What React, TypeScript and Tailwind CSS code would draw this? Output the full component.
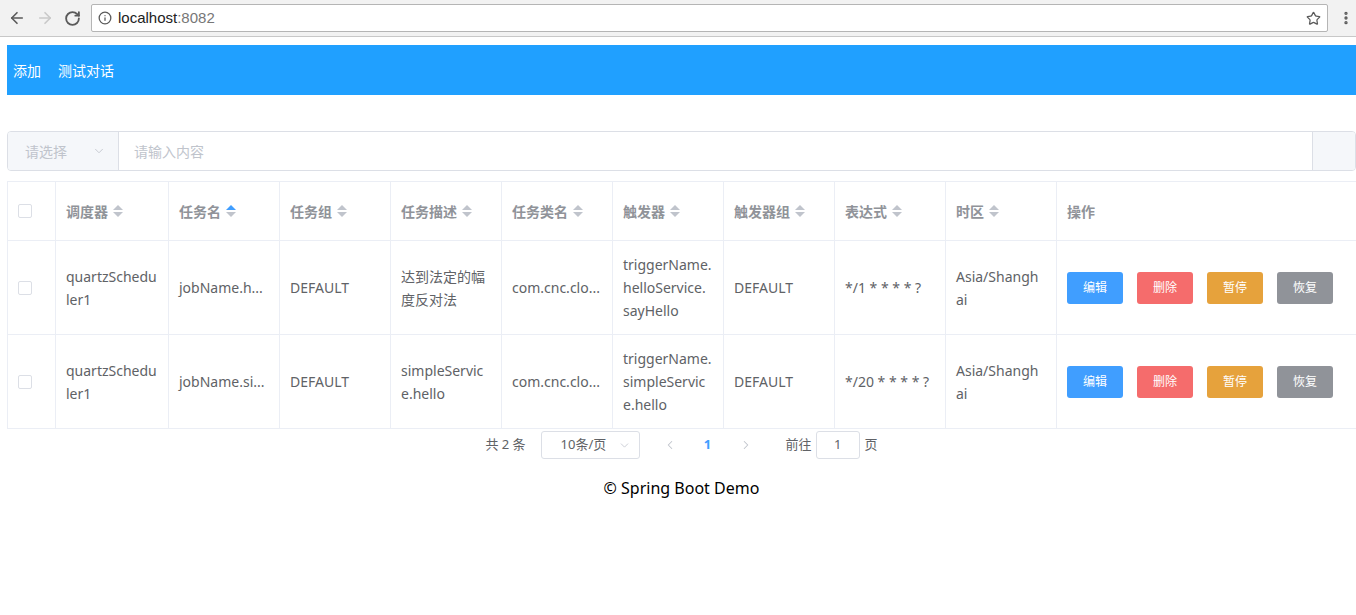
import { ArrowLeft, ArrowRight, RotateCw, Info, Star, EllipsisVertical, ChevronDown, ChevronLeft, ChevronRight } from "lucide-react";

type Row = {
  scheduler: string[];
  job: string;
  group: string;
  desc: string[];
  cls: string;
  trigger: string[];
  tgroup: string;
  cron: string;
  zone: string[];
};

const rows: Row[] = [
  {
    scheduler: ["quartzSchedu", "ler1"],
    job: "jobName.h...",
    group: "DEFAULT",
    desc: ["达到法定的幅", "度反对法"],
    cls: "com.cnc.clo...",
    trigger: ["triggerName.", "helloService.", "sayHello"],
    tgroup: "DEFAULT",
    cron: "*/1 * * * * ?",
    zone: ["Asia/Shangh", "ai"],
  },
  {
    scheduler: ["quartzSchedu", "ler1"],
    job: "jobName.si...",
    group: "DEFAULT",
    desc: ["simpleServic", "e.hello"],
    cls: "com.cnc.clo...",
    trigger: ["triggerName.", "simpleServic", "e.hello"],
    tgroup: "DEFAULT",
    cron: "*/20 * * * * ?",
    zone: ["Asia/Shangh", "ai"],
  },
];

const columns = [
  { label: "调度器", w: "w-[113px]" },
  { label: "任务名", w: "w-[111px]", active: true },
  { label: "任务组", w: "w-[111px]" },
  { label: "任务描述", w: "w-[111px]" },
  { label: "任务类名", w: "w-[111px]" },
  { label: "触发器", w: "w-[111px]" },
  { label: "触发器组", w: "w-[111px]" },
  { label: "表达式", w: "w-[111px]" },
  { label: "时区", w: "w-[111px]" },
];

const SortCaret = ({ active }: { active?: boolean }) => (
  <span className="ml-[5px] flex flex-col gap-[2px]">
    <span
      className={`h-0 w-0 border-x-[5px] border-b-[5px] border-x-transparent ${
        active ? "border-b-[#409eff]" : "border-b-[#c0c4cc]"
      }`}
    />
    <span className="h-0 w-0 border-x-[5px] border-t-[5px] border-x-transparent border-t-[#c0c4cc]" />
  </span>
);

const Checkbox = () => (
  <span className="ml-[10px] block h-[14px] w-[14px] rounded-[2px] border border-[#dcdfe6] bg-white" />
);

const Lines = ({ lines }: { lines: string[] }) => (
  <div>
    {lines.map((l, i) => (
      <div key={i}>{l}</div>
    ))}
  </div>
);

const cell = "flex shrink-0 items-center border-r border-b border-[#ebeef5] px-[10px]";

const ActionButton = ({ label, color }: { label: string; color: string }) => (
  <button className={`h-[32px] w-[56px] rounded-[3px] text-[12px] text-white ${color}`}>{label}</button>
);

export default function App() {
  return (
    <div className="h-[615px] w-[1356px] overflow-hidden bg-white font-['Noto_Sans','Noto_Sans_CJK_SC',sans-serif]">
      {/* browser chrome */}
      <div className="flex h-[37px] items-center border-b border-[#c8c8c8] bg-[#f2f2f2]">
        <div className="ml-[8px] flex items-center gap-[10px]">
          <ArrowLeft className="h-[18px] w-[18px] text-[#5a5a5a]" strokeWidth={2.2} />
          <ArrowRight className="h-[18px] w-[18px] text-[#c9c9c9]" strokeWidth={2.2} />
          <RotateCw className="h-[17px] w-[17px] text-[#5a5a5a]" strokeWidth={2.6} />
        </div>
        <div className="ml-[10px] flex h-[28px] w-[1237px] items-center rounded-[2px] border border-[#b5b5b5] bg-white">
          <Info className="ml-[6px] h-[14px] w-[14px] text-[#5a5a5a]" strokeWidth={2.2} />
          <span className="ml-[6px] font-['Liberation_Sans',sans-serif] text-[15px] text-[#222]">
            localhost<span className="text-[#777]">:8082</span>
          </span>
          <Star className="ml-auto mr-[6px] h-[15px] w-[15px] text-[#5a5a5a]" strokeWidth={2} />
        </div>
        <EllipsisVertical className="ml-[10px] h-[16px] w-[16px] text-[#5a5a5a]" strokeWidth={3} />
      </div>

      <div className="ml-[7px] w-[1349px] pt-[8px]">
        {/* top bar */}
        <div className="flex h-[50px] items-center gap-[17px] bg-[#20a0ff] pl-[6px] text-[14px] text-white">
          <span>添加</span>
          <span>测试对话</span>
        </div>

        {/* search */}
        <div className="mt-[36px] flex h-[40px] overflow-hidden rounded-[4px] border border-[#dcdfe6] text-[14px]">
          <div className="flex w-[111px] shrink-0 items-center border-r border-[#dcdfe6] bg-[#f5f7fa] pl-[17px] pr-[12px] text-[#c0c4cc]">
            <span>请选择</span>
            <ChevronDown className="ml-auto h-[14px] w-[14px] text-[#c0c4cc]" strokeWidth={1.5} />
          </div>
          <div className="flex flex-1 items-center pl-[15px] text-[#c0c4cc]">请输入内容</div>
          <div className="w-[43px] shrink-0 border-l border-[#dcdfe6] bg-[#f5f7fa]" />
        </div>

        {/* table */}
        <div className="mt-[10px] w-[1490px] border-t border-l border-[#ebeef5] text-[14px] leading-[23px] text-[#606266]">
          <div className="flex h-[59px] font-bold text-[#909399]">
            <div className={`${cell} w-[48px] !px-0`}>
              <Checkbox />
            </div>
            {columns.map((c) => (
              <div key={c.label} className={`${cell} ${c.w}`}>
                <span>{c.label}</span>
                <SortCaret active={c.active} />
              </div>
            ))}
            <div className={`${cell} w-[330px]`}>操作</div>
          </div>
          {rows.map((r, i) => (
            <div key={i} className="flex h-[94px]">
              <div className={`${cell} w-[48px] !px-0`}>
                <Checkbox />
              </div>
              <div className={`${cell} w-[113px]`}>
                <Lines lines={r.scheduler} />
              </div>
              <div className={`${cell} w-[111px]`}>{r.job}</div>
              <div className={`${cell} w-[111px]`}>{r.group}</div>
              <div className={`${cell} w-[111px]`}>
                <Lines lines={r.desc} />
              </div>
              <div className={`${cell} w-[111px]`}>{r.cls}</div>
              <div className={`${cell} w-[111px]`}>
                <Lines lines={r.trigger} />
              </div>
              <div className={`${cell} w-[111px]`}>{r.tgroup}</div>
              <div className={`${cell} w-[111px]`}>{r.cron}</div>
              <div className={`${cell} w-[111px]`}>
                <Lines lines={r.zone} />
              </div>
              <div className={`${cell} w-[330px] gap-[14px]`}>
                <ActionButton label="编辑" color="bg-[#409eff]" />
                <ActionButton label="删除" color="bg-[#f56c6c]" />
                <ActionButton label="暂停" color="bg-[#e6a23c]" />
                <ActionButton label="恢复" color="bg-[#909399]" />
              </div>
            </div>
          ))}
        </div>

        {/* pagination */}
        <div className="mt-[2px] flex h-[28px] items-center justify-center text-[13px] text-[#606266]">
          <span className="mr-[15px]">共 2 条</span>
          <div className="flex h-[28px] w-[99px] items-center rounded-[3px] border border-[#dcdfe6] pl-[19px] pr-[8px]">
            <span>10条/页</span>
            <ChevronDown className="ml-auto h-[13px] w-[13px] text-[#c0c4cc]" strokeWidth={1.5} />
          </div>
          <div className="ml-[15px] flex w-[30px] justify-center">
            <ChevronLeft className="h-[14px] w-[14px] text-[#c0c4cc]" strokeWidth={1.8} />
          </div>
          <div className="ml-[8px] flex w-[30px] justify-center font-bold text-[#409eff]">1</div>
          <div className="ml-[8px] flex w-[30px] justify-center">
            <ChevronRight className="h-[14px] w-[14px] text-[#c0c4cc]" strokeWidth={1.8} />
          </div>
          <span className="ml-[25px]">前往</span>
          <div className="ml-[4px] flex h-[28px] w-[44px] items-center justify-center rounded-[3px] border border-[#dcdfe6]">
            1
          </div>
          <span className="ml-[5px]">页</span>
        </div>

        {/* footer */}
        <div className="mt-[19px] text-center text-[16px] leading-[20px] text-black">© Spring Boot Demo</div>
      </div>
    </div>
  );
}
